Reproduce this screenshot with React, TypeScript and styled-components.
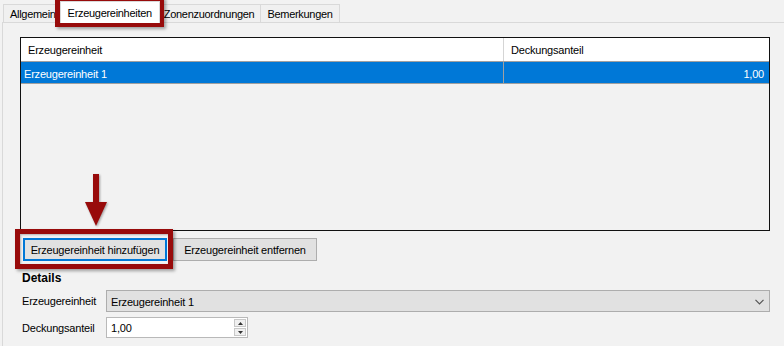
import React from "react";
import styled, { createGlobalStyle, css } from "styled-components";

const GlobalStyle = createGlobalStyle`
  html, body {
    margin: 0;
    padding: 0;
    background: #f2f2f2;
  }
  body {
    font-family: "Liberation Sans", Arial, sans-serif;
    font-size: 11px;
    color: #000;
  }
`;

type Row = { name: string; share: string };

const rows: Row[] = [{ name: "Erzeugereinheit 1", share: "1,00" }];
const tabs = ["Allgemein", "Erzeugereinheiten", "Zonenzuordnungen", "Bemerkungen"];

const App = () => {
  const active = 1;
  return (
    <Screen>
      <GlobalStyle />
      <TabStrip>
        {tabs.map((t, i) => (
          <Tab key={t} active={i === active}>
            {t}
          </Tab>
        ))}
      </TabStrip>
      <Panel>
        <Grid>
          <HeaderRow>
            <HeaderCell width={483}>Erzeugereinheit</HeaderCell>
            <HeaderCell>Deckungsanteil</HeaderCell>
          </HeaderRow>
          {rows.map((r) => (
            <DataRow key={r.name} selected>
              <DataCell width={483}>{r.name}</DataCell>
              <DataCell align="right">{r.share}</DataCell>
            </DataRow>
          ))}
        </Grid>
        <ButtonRow>
          <Button focused>Erzeugereinheit hinzufügen</Button>
          <Button>Erzeugereinheit entfernen</Button>
        </ButtonRow>
        <Details>
          <SectionTitle>Details</SectionTitle>
          <FormRow>
            <FieldLabel>Erzeugereinheit</FieldLabel>
            <Combo>
              <span>Erzeugereinheit 1</span>
              <svg width="9" height="6" viewBox="0 0 9 6">
                <path d="M0.5 0.8 L4.5 4.8 L8.5 0.8" fill="none" stroke="#555" strokeWidth="1.2" />
              </svg>
            </Combo>
          </FormRow>
          <FormRow>
            <FieldLabel>Deckungsanteil</FieldLabel>
            <Numeric>
              <span>1,00</span>
              <Spinner>
                <SpinButton>
                  <svg width="5" height="3" viewBox="0 0 5 3">
                    <path d="M0 3 L2.5 0 L5 3 Z" fill="#333" />
                  </svg>
                </SpinButton>
                <SpinButton>
                  <svg width="5" height="3" viewBox="0 0 5 3">
                    <path d="M0 0 L2.5 3 L5 0 Z" fill="#333" />
                  </svg>
                </SpinButton>
              </Spinner>
            </Numeric>
          </FormRow>
        </Details>
      </Panel>

      <Highlight style={{ left: 55, top: -3, width: 109, height: 30 }} />
      <Highlight style={{ left: 15, top: 229, width: 158, height: 40 }} />
      <Arrow width="24" height="56" viewBox="0 0 24 56">
        <rect x="9" y="0" width="6" height="30" fill="#980b0b" />
        <path d="M1 28 L23 28 L12 52 Z" fill="#980b0b" />
      </Arrow>
    </Screen>
  );
};

const Screen = styled.div`
  position: relative;
  width: 784px;
  height: 346px;
  overflow: hidden;
  background: #f2f2f2;
`;

const TabStrip = styled.div`
  display: flex;
  align-items: flex-end;
  height: 22px;
  padding-left: 4px;
`;

const Tab = styled.div<{ active?: boolean }>`
  position: relative;
  display: flex;
  align-items: center;
  height: 17px;
  padding: 0 6px;
  border: 1px solid #d9d9d9;
  border-bottom: none;
  margin-left: -1px;
  background: #f0f0f0;
  white-space: nowrap;
  letter-spacing: -0.3px;

  ${(p) =>
    p.active &&
    css`
      z-index: 1;
      height: 21px;
      margin: 0 -2px -1px -3px;
      padding: 0 7px;
      background: #ffffff;
    `}
`;

const Panel = styled.div`
  display: flex;
  flex-direction: column;
  margin-left: 2px;
  height: 330px;
  border: 1px solid #d9d9d9;
  border-right: none;
  padding: 14px 0 0 17px;
`;

const Grid = styled.div`
  width: 748px;
  height: 192px;
  border: 1px solid #111;
  background: #f2f2f2;
`;

const HeaderRow = styled.div`
  display: flex;
  height: 23px;
  background: #fff;
  border-bottom: 1px solid #a0a0a0;
`;

const HeaderCell = styled.div<{ width?: number }>`
  display: flex;
  align-items: center;
  ${(p) => (p.width ? `width: ${p.width}px; border-right: 1px solid #d5d5d5;` : "flex: 1;")}
  padding-left: 7px;
  box-sizing: border-box;
  letter-spacing: -0.2px;
`;

const DataRow = styled.div<{ selected?: boolean }>`
  display: flex;
  height: 21px;
  border-bottom: 1px solid #a0a0a0;
  background: ${(p) => (p.selected ? "#0078d7" : "#fff")};
  color: ${(p) => (p.selected ? "#fff" : "#000")};
`;

const DataCell = styled.div<{ width?: number; align?: "left" | "right" }>`
  display: flex;
  align-items: center;
  justify-content: ${(p) => (p.align === "right" ? "flex-end" : "flex-start")};
  ${(p) => (p.width ? `width: ${p.width}px; border-right: 1px solid #a0a0a0;` : "flex: 1;")}
  padding: 2px 5px 0 3px;
  box-sizing: border-box;
  letter-spacing: -0.2px;
`;

const ButtonRow = styled.div`
  display: flex;
  gap: 6px;
  margin: 7px 0 0 3px;
`;

const Button = styled.div<{ focused?: boolean }>`
  display: flex;
  align-items: center;
  justify-content: center;
  width: 144px;
  height: 23px;
  box-sizing: border-box;
  background: #e1e1e1;
  border: 1px solid #adadad;
  letter-spacing: -0.2px;
  white-space: nowrap;

  ${(p) =>
    p.focused &&
    css`
      border: 2px solid #0078d7;
    `}
`;

const Details = styled.div`
  display: flex;
  flex-direction: column;
  padding-left: 2px;
`;

const SectionTitle = styled.div`
  margin-top: 10px;
  height: 14px;
  line-height: 14px;
  font-weight: bold;
  font-size: 12px;
`;

const FormRow = styled.div`
  display: flex;
  align-items: center;
  margin-top: 5px;
`;

const FieldLabel = styled.div`
  width: 84px;
  letter-spacing: -0.2px;
`;

const Combo = styled.div`
  display: flex;
  align-items: center;
  justify-content: space-between;
  width: 664px;
  height: 22px;
  box-sizing: border-box;
  padding: 1px 5px 0 4px;
  background: #e1e1e1;
  border: 1px solid #adadad;
  letter-spacing: -0.2px;
`;

const Numeric = styled.div`
  display: flex;
  align-items: center;
  justify-content: space-between;
  width: 142px;
  height: 21px;
  box-sizing: border-box;
  padding: 0 1px 0 4px;
  background: #fff;
  border: 1px solid #b9b9b9;
  letter-spacing: -0.2px;
`;

const Spinner = styled.div`
  display: flex;
  flex-direction: column;
  gap: 1px;
`;

const SpinButton = styled.div`
  display: flex;
  align-items: center;
  justify-content: center;
  width: 12px;
  height: 8px;
  background: #f0f0f0;
  border: 1px solid #c8c8c8;
  box-sizing: border-box;
`;

const Highlight = styled.div`
  position: absolute;
  box-sizing: border-box;
  border: 5px solid #980b0b;
  box-shadow: 2px 2px 3px rgba(0, 0, 0, 0.35), inset 1px 1px 2px rgba(0, 0, 0, 0.25);
  pointer-events: none;
`;

const Arrow = styled.svg`
  position: absolute;
  left: 84px;
  top: 174px;
  filter: drop-shadow(1px 1px 1px rgba(0, 0, 0, 0.35));
`;

export default App;
